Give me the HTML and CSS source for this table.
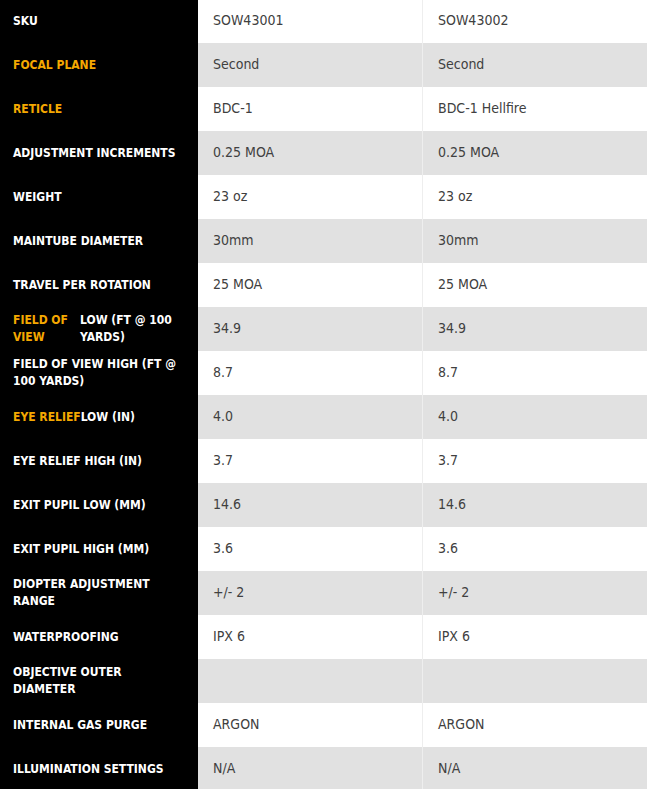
FILE: index.html
```html
<!DOCTYPE html>
<html>
<head>
<meta charset="utf-8">
<link rel="stylesheet" href="styles.css">
</head>
<body>
<table class="specs">
  <tbody>
    <tr><th><span class="lbl">SKU</span></th><td>SOW43001</td><td>SOW43002</td></tr>
    <tr><th><span class="lbl hl">FOCAL PLANE</span></th><td>Second</td><td>Second</td></tr>
    <tr><th><span class="lbl hl">RETICLE</span></th><td>BDC-1</td><td>BDC-1 Hellfire</td></tr>
    <tr><th><span class="lbl">ADJUSTMENT INCREMENTS</span></th><td>0.25 MOA</td><td>0.25 MOA</td></tr>
    <tr><th><span class="lbl">WEIGHT</span></th><td>23 oz</td><td>23 oz</td></tr>
    <tr><th><span class="lbl">MAINTUBE DIAMETER</span></th><td>30mm</td><td>30mm</td></tr>
    <tr><th><span class="lbl">TRAVEL PER ROTATION</span></th><td>25 MOA</td><td>25 MOA</td></tr>
    <tr><th><div class="split"><span class="lbl hl grp">FIELD OF VIEW</span><span class="lbl sub">LOW (FT @ 100 YARDS)</span></div></th><td>34.9</td><td>34.9</td></tr>
    <tr><th><span class="lbl">FIELD OF VIEW HIGH (FT @ 100 YARDS)</span></th><td>8.7</td><td>8.7</td></tr>
    <tr><th><div class="split"><span class="lbl hl">EYE RELIEF</span><span class="lbl">LOW (IN)</span></div></th><td>4.0</td><td>4.0</td></tr>
    <tr><th><span class="lbl">EYE RELIEF HIGH (IN)</span></th><td>3.7</td><td>3.7</td></tr>
    <tr><th><span class="lbl">EXIT PUPIL LOW (MM)</span></th><td>14.6</td><td>14.6</td></tr>
    <tr><th><span class="lbl">EXIT PUPIL HIGH (MM)</span></th><td>3.6</td><td>3.6</td></tr>
    <tr><th><span class="lbl">DIOPTER ADJUSTMENT RANGE</span></th><td>+/- 2</td><td>+/- 2</td></tr>
    <tr><th><span class="lbl">WATERPROOFING</span></th><td>IPX 6</td><td>IPX 6</td></tr>
    <tr><th><span class="lbl">OBJECTIVE OUTER DIAMETER</span></th><td></td><td></td></tr>
    <tr><th><span class="lbl">INTERNAL GAS PURGE</span></th><td>ARGON</td><td>ARGON</td></tr>
    <tr><th><span class="lbl">ILLUMINATION SETTINGS</span></th><td>N/A</td><td>N/A</td></tr>
  </tbody>
</table>
</body>
</html>
```

FILE: styles.css
```css
html, body {
  margin: 0;
  padding: 0;
  background: #ffffff;
}
.specs {
  border-collapse: collapse;
  width: 647px;
  table-layout: fixed;
  margin-top: -1px;
}
.specs tr {
  height: 44px;
}
.specs tr:nth-child(even) td {
  background: #e1e1e1;
}
.specs th {
  width: 198px;
  box-sizing: border-box;
  background: #000000;
  text-align: left;
  vertical-align: middle;
  padding: 0 15px 0 13px;
  font-family: "DejaVu Sans Condensed", "DejaVu Sans", sans-serif;
  font-weight: bold;
  font-size: 12px;
  line-height: 17px;
  color: #ffffff;
}
.specs td {
  box-sizing: border-box;
  padding: 0 15px 2px;
  vertical-align: middle;
  font-family: "DejaVu Sans Condensed", "DejaVu Sans", sans-serif;
  font-size: 14px;
  color: #404040;
}
.specs td + td {
  border-left: 1px solid #eeeeee;
}
.lbl {
  display: inline-block;
}
.hl {
  color: #f5a800;
}
.split {
  display: flex;
  align-items: flex-start;
}
.grp {
  width: 67px;
  flex: none;
}
.sub {
  max-width: 92px;
}
```
